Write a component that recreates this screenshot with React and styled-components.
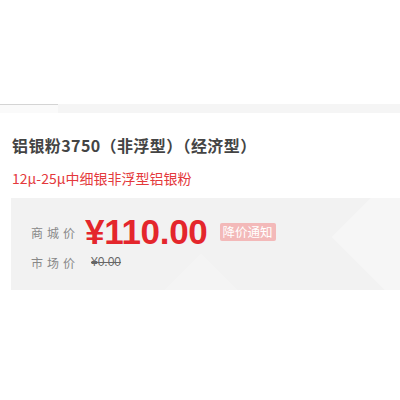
import React from 'react';
import styled, { createGlobalStyle } from 'styled-components';

const GlobalStyle = createGlobalStyle`
  body {
    margin: 0;
    background: #fff;
    font-family: "Noto Sans CJK SC", "Liberation Sans", sans-serif;
  }
`;

const Page = styled.div`
  width: 400px;
  height: 400px;
  overflow: hidden;
  padding-top: 104px;
  box-sizing: border-box;
`;

const Strip = styled.div`
  height: 9px;
  background: #f5f5f5;
  display: flex;
`;

const StripTab = styled.div`
  width: 58px;
  border-top: 1px solid #d4d4d4;
  background: #fafafa;
`;

const Info = styled.div`
  padding: 20px 0 0 12px;
`;

const Title = styled.h1`
  margin: 0;
  font-size: 16px;
  line-height: 24px;
  font-weight: bold;
  color: #444;
  letter-spacing: 0.4px;
`;

const Sub = styled.p`
  margin: 10px 0 0;
  font-size: 14px;
  line-height: 22px;
  color: #e4393c;
`;

const PriceBox = styled.div`
  position: relative;
  overflow: hidden;
  margin: 9px 0 0 -1px;
  padding: 15px 20px 17px 20px;
  background: #f2f2f2;
  display: flex;
  flex-direction: column;

  &::before {
    content: '';
    position: absolute;
    right: -40px;
    top: -6px;
    width: 90px;
    height: 90px;
    transform: rotate(45deg);
    background: rgba(255, 255, 255, 0.3);
  }
  &::after {
    content: '';
    position: absolute;
    left: 150px;
    bottom: -60px;
    width: 80px;
    height: 80px;
    transform: rotate(45deg);
    background: rgba(255, 255, 255, 0.2);
  }
`;

const Row = styled.div`
  position: relative;
  z-index: 1;
  display: flex;
  align-items: center;
  height: ${(p) => p.h}px;
`;

const Label = styled.span`
  width: 54px;
  font-size: 12px;
  letter-spacing: 4px;
  color: #888;
`;

const Price = styled.span`
  font-family: "Liberation Sans", sans-serif;
  font-size: 35px;
  font-weight: bold;
  color: #e4262c;
  letter-spacing: -0.3px;
`;

const Badge = styled.span`
  margin-left: 12px;
  height: 18px;
  line-height: 18px;
  padding: 0 3px;
  font-size: 12.5px;
  color: #fff;
  background: #f3b9b9;
  border-radius: 2px;
`;

const Market = styled.span`
  margin-left: 6px;
  font-family: "Liberation Sans", sans-serif;
  font-size: 12px;
  color: #666;
  text-decoration: line-through;
`;

export default function App() {
  return (
    <Page>
      <GlobalStyle />
      <Strip>
        <StripTab />
      </Strip>
      <Info>
        <Title>铝银粉3750（非浮型）（经济型）</Title>
        <Sub>12μ-25μ中细银非浮型铝银粉</Sub>
        <PriceBox>
          <Row h={38}>
            <Label>商城价</Label>
            <Price>¥110.00</Price>
            <Badge>降价通知</Badge>
          </Row>
          <Row h={22}>
            <Label>市场价</Label>
            <Market>¥0.00</Market>
          </Row>
        </PriceBox>
      </Info>
    </Page>
  );
}
